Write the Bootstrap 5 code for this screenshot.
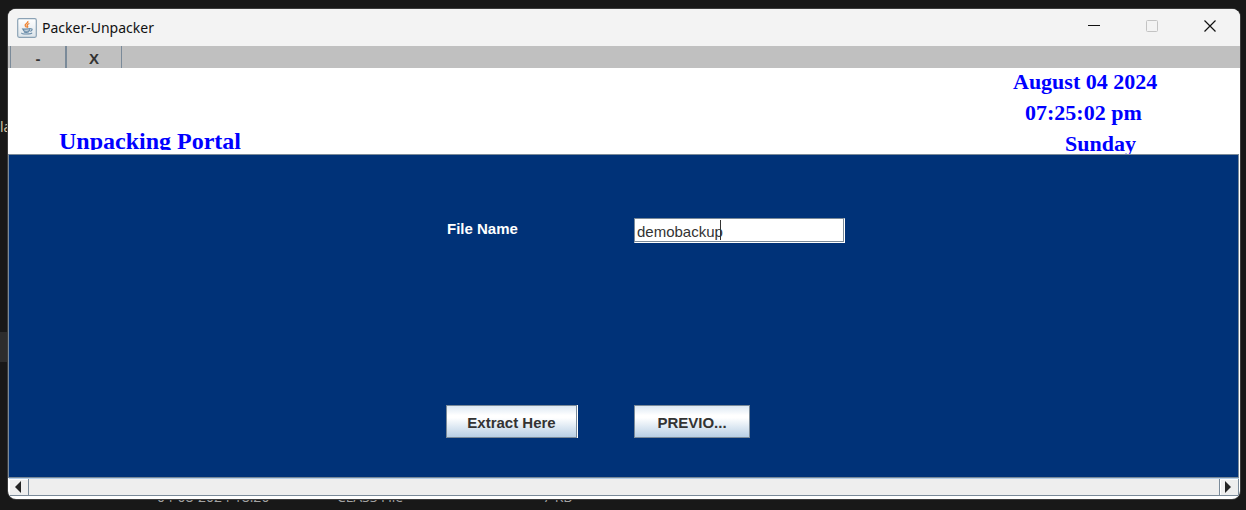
<!DOCTYPE html>
<html lang="en">
<head>
<meta charset="utf-8">
<meta name="viewport" content="width=device-width, initial-scale=1">
<title>Packer-Unpacker</title>
<link href="https://cdn.jsdelivr.net/npm/bootstrap@5.3.0/dist/css/bootstrap.min.css" rel="stylesheet">
<style>
body { background: #181818; font-family: "Liberation Sans", Arial, sans-serif; font-size: 15px; line-height: 20px; color: #333; padding: 9px 6px 11px 8px; }
button { font-family: inherit; line-height: 20px; }
.behind { z-index: 0; color: #a3a3a3; font-family: "Open Sans", sans-serif; font-size: 14px; line-height: 20px; }
.behind-left { left: 0; top: 117px; color: #d8c8a8; }
.behind-row { left: 157px; bottom: 3px; }
.behind-row span { width: 206px; }
.behind-row span:first-child { width: 180px; }
.behind-sel { left: 0; top: 332px; width: 8px; height: 30px; background: #2d2d2d; }
.win { z-index: 1; background: #fff; border-radius: 8px; box-shadow: 0 0 0 1px #3c3c3c; }
.titlebar { background: #f3f3f3; height: 37px; padding: 0 1px 0 9px; }
.titlebar h1 { font: 400 14px/20px "Noto Sans", sans-serif; color: #111; margin-left: 5px; }
.titlebar button { width: 58px; height: 36px; }
.menu { background: #c0c0c0; height: 22px; padding-left: 2px; }
.menu button { width: 56px; border: solid #7a8a99; border-width: 0 1px; background: none; font-weight: 700; color: #333; padding: 3px 0 0; height: 22px; }
.banner { height: 86px; color: #00f; font-family: "Century Schoolbook", "Liberation Serif", serif; font-weight: 700; padding: 0 80px 0 51px; }
.banner h2 { font: inherit; font-size: 24px; line-height: 22px; height: 20px; overflow: hidden; margin: 62px 0 0; }
.stamp { width: 147px; font-size: 22px; line-height: 27px; }
.stamp-time { padding-left: 12px; }
.work { background: #003278; border: 1px solid #7a8a99; margin-right: 1px; padding: 63px 0 39px 437px; }
.pair { display: grid; grid-template-columns: 188px 211px; align-items: start; }
.pair label { color: #fff; font-weight: 700; padding: 1px 0 0 1px; }
.field { height: 25px; border-radius: 0; border: 1px solid #7a8a99; border-right-color: #fff; border-bottom-color: #fff; box-shadow: inset -1px -1px #7a8a99; padding: 1px 2px 0; font: 15px/20px "Liberation Sans", sans-serif; color: #333; outline: 0; width: 100%; }
.caret { left: 86px; top: 2px; width: 1px; height: 20px; background: #333; }
.metal { height: 33px; border: 1px solid #7a8a99; background: linear-gradient(#dde8f3 0%, #fff 30%, #fff 38%, #b8cfe5 100%); font-weight: 700; color: #333; padding: 2px 0 0; }
.metal-wide { width: 131px; box-shadow: 1px 0 #fff; }
.metal-short { width: 116px; }
.scroller { height: 18px; background: #eee; border-top: 1px solid #b8cfe5; border-bottom: 1px solid #7a8a99; margin: 0 1px 3px 1px; }
.scroller button { width: 20px; border: 0; background: #eee; box-shadow: inset 1px 1px #fff; padding: 0; }
.scroller button:first-child { border-right: 1px solid #7a8a99; padding-right: 2px; }
.scroller button:last-child { border: solid #7a8a99; border-width: 0 1px; padding-right: 2px; }
</style>
</head>
<body class="vh-100 d-flex flex-column overflow-hidden position-relative">
<div class="behind behind-left position-absolute">la</div>
<div class="behind behind-sel position-absolute"></div>
<div class="behind behind-row position-absolute d-flex"><span>04-08-2024 18:20</span><span>CLASS File</span><span>7 KB</span></div>

<main class="win position-relative flex-fill d-flex flex-column overflow-hidden">
  <header class="titlebar d-flex align-items-center">
    <svg width="20" height="20" viewBox="0 0 20 20" aria-hidden="true">
      <defs><linearGradient id="tile" x2="0" y2="1"><stop stop-color="#fff"/><stop offset="1" stop-color="#dce4ea"/></linearGradient></defs>
      <rect x=".7" y=".7" width="18.6" height="18.6" rx="1.500" fill="url(#tile)" stroke="#8ba2b5" stroke-width="1.2"/>
      <path d="M10.8 3c1.300 2-3.600 3-2.600 4.600.4.800 1.200 1.100 1.400 1.900M12.400 5.500c-2.400 1-2.700 1.800-1.800 2.700.4.600.1 1.100-.4 1.500" fill="none" stroke="#ee8434" stroke-width="1.300"/>
      <path d="M5.500 10.500c-1.300.8 7 .9 8 0M6.200 11.500c.2 2.300 6.200 2.300 6.600 0M13.400 10.700c2.700-.3 2 2.400-.6 2.500M7 13.600c.2 1.100 4.500 1.100 5 0M5 15c-2 1.400 9.400 1.500 10-.2" fill="none" stroke="#6488a6" stroke-width="1.1"/>
    </svg>
    <h1 class="mb-0 me-auto">Packer-Unpacker</h1>
    <button type="button" class="btn p-0 pb-1 border-0 lh-1" aria-label="Minimize"><svg width="12" height="12"><path d="M0 5.500h12" stroke="#111"/></svg></button>
    <button type="button" class="btn p-0 pb-1 border-0 lh-1" aria-label="Maximize"><svg width="12" height="12"><rect x=".5" y=".5" width="11" height="11" rx="1" fill="none" stroke="#c3c3c3"/></svg></button>
    <button type="button" class="btn p-0 pb-1 border-0 lh-1" aria-label="Close"><svg width="12" height="12"><path d="M.5.5l11 11M11.500.5l-11 11" stroke="#111" stroke-width="1.2"/></svg></button>
  </header>
  <nav class="menu d-flex" aria-label="Window"><button type="button">-</button><button type="button">X</button></nav>
  <section class="banner d-flex justify-content-between align-items-start">
    <h2>Unpacking Portal</h2>
    <div class="stamp d-grid gap-1 text-nowrap">
      <div>August 04 2024</div>
      <div class="stamp-time">07:25:02 pm</div>
      <div class="text-end pe-4">Sunday</div>
    </div>
  </section>
  <form class="work flex-fill d-flex flex-column justify-content-between">
    <div class="pair">
      <label for="fname">File Name</label>
      <div class="position-relative">
        <input id="fname" class="field d-block" type="text" value="demobackup">
        <span class="caret position-absolute"></span>
      </div>
    </div>
    <div class="pair">
      <button type="button" class="metal metal-wide">Extract Here</button>
      <button type="button" class="metal metal-short">PREVIO...</button>
    </div>
  </form>
  <div class="scroller d-flex justify-content-between">
    <button type="button" class="d-flex align-items-center justify-content-center" aria-label="Scroll left"><svg width="6" height="12"><path d="M6 0v12L0 6z" fill="#222"/></svg></button>
    <button type="button" class="d-flex align-items-center justify-content-center" aria-label="Scroll right"><svg width="6" height="12"><path d="M0 0v12l6-6z" fill="#222"/></svg></button>
  </div>
</main>
<script src="https://cdn.jsdelivr.net/npm/bootstrap@5.3.0/dist/js/bootstrap.bundle.min.js"></script>
</body>
</html>
